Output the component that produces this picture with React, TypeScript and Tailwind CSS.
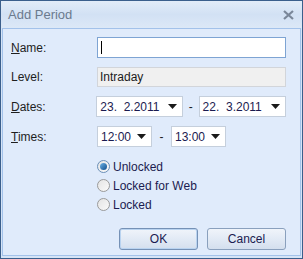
import React from 'react';

const font = { fontFamily: '"Liberation Sans", Arial, sans-serif' };

const Caret = () => (
  <svg width="9" height="5" viewBox="0 0 9 5" className="shrink-0">
    <path d="M0 0 H9 L4.5 5 Z" fill="#1a1a1a" />
  </svg>
);

const Combo: React.FC<{ value: string; width: string }> = ({ value, width }) => (
  <div
    className={`flex h-[21px] ${width} items-center justify-between border border-[#c5cfdc] bg-white pl-[3px] pr-[5px] text-[#1b1b50]`}
  >
    <span className="whitespace-pre">{value}</span>
    <Caret />
  </div>
);

const Radio: React.FC<{ checked?: boolean; label: string }> = ({ checked, label }) => (
  <div className="flex h-[19px] items-center gap-[3px]">
    <div
      className={`flex h-[13px] w-[13px] items-center justify-center rounded-full border ${
        checked ? 'border-[#6a8fb8]' : 'border-[#9a9a9a]'
      } bg-gradient-to-br from-[#e4e4e4] to-[#fafafa]`}
    >
      {checked && (
        <div className="h-[7px] w-[7px] rounded-full bg-gradient-to-br from-[#6fb4e6] to-[#0c4e8c]" />
      )}
    </div>
    <span className="text-[#1b1b50]">{label}</span>
  </div>
);

export default function App() {
  return (
    <div
      className="flex h-[259px] w-[303px] flex-col border border-[#3b5f8c] bg-[#d6e4f6] text-[12px]"
      style={font}
    >
      {/* title bar */}
      <div className="flex h-[27px] shrink-0 items-center justify-between bg-gradient-to-b from-[#e2ecf8] via-[#d2e1f4] to-[#dce8f7] pl-[7px] pr-[8px]">
        <span className="text-[13px] text-[#6b7a8e]">Add Period</span>
        <svg width="11" height="10" viewBox="0 0 11 10">
          <path d="M1 1 L10 9 M10 1 L1 9" stroke="#7a8799" strokeWidth="2.2" />
        </svg>
      </div>
      {/* body */}
      <div className="mx-[1px] mb-[2px] flex flex-1 flex-col border border-[#a3c2ea] bg-[#e0ebfb] pl-[8px] pr-[14px] pt-[8px]">
        <div className="flex flex-col gap-[9px]">
          <div className="flex items-center">
            <span className="w-[86px] text-[#1e1e1e]">
              <u>N</u>ame:
            </span>
            <div className="flex h-[21px] flex-1 items-center border border-[#7ea4d3] bg-white pl-[3px]">
              <div className="h-[13px] w-[1px] bg-black" />
            </div>
          </div>
          <div className="flex items-center">
            <span className="w-[86px] text-[#1e1e1e]">Level:</span>
            <div className="flex h-[20px] flex-1 items-center border border-[#d2d5da] bg-[#f0f0f0] pl-[2px] text-[#1b1b1b]">
              Intraday
            </div>
          </div>
          <div className="flex items-center">
            <span className="w-[86px] text-[#1e1e1e]">
              <u>D</u>ates:
            </span>
            <Combo value="23.  2.2011" width="w-[87px]" />
            <span className="w-[16px] text-center text-[#1b1b1b]">-</span>
            <Combo value="22.  3.2011" width="w-[88px]" />
          </div>
          <div className="flex items-center">
            <span className="w-[86px] text-[#1e1e1e]">
              <u>T</u>imes:
            </span>
            <Combo value="12:00" width="w-[55px]" />
            <span className="w-[19px] text-center text-[#1b1b1b]">-</span>
            <Combo value="13:00" width="w-[55px]" />
          </div>
        </div>
        <div className="ml-[86px] mt-[10px] flex flex-col">
          <Radio checked label="Unlocked" />
          <Radio label="Locked for Web" />
          <Radio label="Locked" />
        </div>
        <div className="mt-[14px] flex justify-end gap-[9px]">
          <button className="h-[22px] w-[79px] rounded-[3px] border border-[#7591b6] bg-gradient-to-b from-[#f0f4fa] via-[#e2eaf5] to-[#d4dfee] text-[#1b1b50] shadow-[inset_0_0_0_1px_#b9d3f0]">
            OK
          </button>
          <button className="h-[22px] w-[79px] rounded-[3px] border border-[#8aa0bd] bg-gradient-to-b from-[#f0f4fa] via-[#e2eaf5] to-[#d4dfee] text-[#1b1b50]">
            Cancel
          </button>
        </div>
      </div>
    </div>
  );
}
